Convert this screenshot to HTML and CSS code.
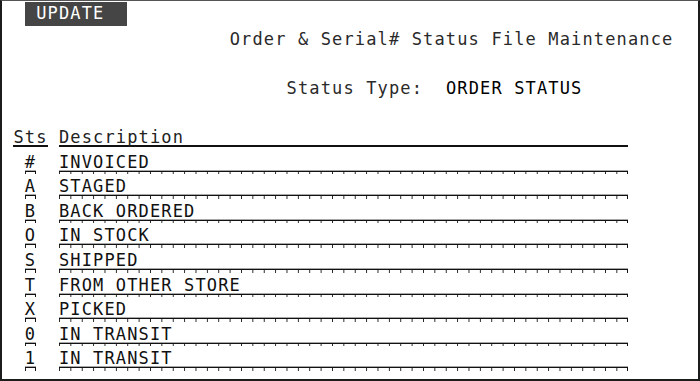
FILE: index.html
```html
<!DOCTYPE html>
<html lang="en">

<head>
    <meta charset="UTF-8">
    <meta name="viewport" content="width=device-width, initial-scale=1.0">
    <title>Status File Maintenance</title>
    <link rel="stylesheet" href="styles.css">
</head>

<body>
    <div class="screen">
        <div class="row">  <span class="badge">UPDATE</span></div>
        <div class="row">                    <span class="label">Order &amp; Serial# Status File Maintenance</span></div>
        <div class="row"></div>
        <div class="row">                         <span class="label">Status Type:</span>  <span class="value">ORDER STATUS</span></div>
        <div class="row"></div>

        <!-- column headings -->
        <div class="row"> <span class="head head-sts">Sts</span> <span class="head head-desc">Description</span></div>

        <!-- status records -->
        <div class="row">  <span class="field code">#</span>  <span class="field desc">INVOICED</span></div>
        <div class="row">  <span class="field code">A</span>  <span class="field desc">STAGED</span></div>
        <div class="row">  <span class="field code">B</span>  <span class="field desc">BACK ORDERED</span></div>
        <div class="row">  <span class="field code">O</span>  <span class="field desc">IN STOCK</span></div>
        <div class="row">  <span class="field code">S</span>  <span class="field desc">SHIPPED</span></div>
        <div class="row">  <span class="field code">T</span>  <span class="field desc">FROM OTHER STORE</span></div>
        <div class="row">  <span class="field code">X</span>  <span class="field desc">PICKED</span></div>
        <div class="row">  <span class="field code">0</span>  <span class="field desc">IN TRANSIT</span></div>
        <div class="row">  <span class="field code">1</span>  <span class="field desc">IN TRANSIT</span></div>
    </div>
</body>

</html>
```

FILE: styles.css
```css
:root {
    --cw: 11.38px;
    --rh: 24.6px;
}

body {
    margin: 0;
    background: #fff;
}

.screen {
    box-sizing: border-box;
    width: 700px;
    height: 381px;
    border: 2px solid #1c1c1c;
    border-top: 1px solid #555;
    padding-top: 1px;
    background: #fff;
    font-family: "DejaVu Sans Mono", "Liberation Mono", monospace;
    font-size: 17px;
    letter-spacing: calc(var(--cw) - 0.602 * 17px);
    color: #222;
    overflow: hidden;
}

.row {
    height: var(--rh);
    line-height: var(--rh);
    white-space: pre;
}

.badge {
    display: inline-block;
    box-sizing: border-box;
    width: calc(var(--cw) * 9);
    height: 24px;
    padding-left: var(--cw);
    vertical-align: top;
    line-height: 22px;
    background: #454545;
    color: #fff;
}

.label {
    color: #2a2a2a;
}

.value {
    color: #000;
}

.head {
    display: inline-block;
    height: var(--rh);
    vertical-align: top;
    background: linear-gradient(#111, #111) 0 20px / 100% 2px no-repeat;
}

.head-sts {
    width: calc(var(--cw) * 3);
}

.head-desc {
    width: calc(var(--cw) * 50);
}

.field {
    display: inline-block;
    height: var(--rh);
    vertical-align: top;
    color: #111;
    background:
        linear-gradient(#111, #111) 0 21px / 100% 1px no-repeat,
        linear-gradient(#a8a8a8, #a8a8a8) 0 20px / 100% 1px no-repeat,
        linear-gradient(#111, #111) right 22px / 1px 3px no-repeat,
        linear-gradient(to right, #222 1px, transparent 1px) 0 22px / var(--cw) 3px repeat-x;
}

.code {
    width: var(--cw);
}

.desc {
    width: calc(var(--cw) * 50);
}
```
